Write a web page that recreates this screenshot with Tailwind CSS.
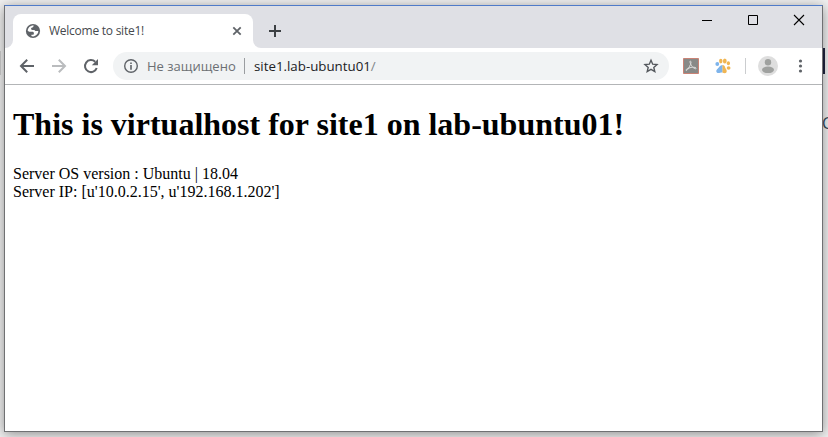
<!DOCTYPE html>
<html lang="ru">
<head>
<meta charset="utf-8">
<title>Welcome to site1!</title>
<script src="https://cdn.jsdelivr.net/npm/@tailwindcss/browser@4"></script>
</head>
<body class="relative h-[437px] w-[828px] overflow-hidden bg-[#f1f1f1] pl-1 pt-[5px]">
  <!-- Content of the window behind -->
  <div class="absolute left-[-4px] top-[51px] h-6 w-[5px] bg-[#d0d0d0]"></div>
  <div class="absolute left-[822px] top-[48px] h-[26px] w-[3px] bg-[#202540]"></div>
  <div class="absolute left-[822px] top-[113px] font-['Open_Sans',sans-serif] text-[16px] leading-5 text-[#33475b]">C</div>

  <div class="relative flex h-[427px] w-[819px] flex-col border border-[#707173] border-t-[#4f7bc9] bg-white shadow-[0_2px_12px_rgba(0,0,0,0.42)]">
    <!-- Tab strip -->
    <div class="flex h-[42px] shrink-0 bg-[#dfe0e5]">
      <div class="flex w-2 items-end bg-white"><div class="h-[42px] w-2 rounded-br-lg bg-[#dfe0e5]"></div></div>
      <div class="mt-2 flex h-[34px] w-60 items-center rounded-t-lg bg-white pl-3">
        <svg class="size-4 shrink-0" viewBox="0 0 16 16"><circle cx="8" cy="8" r="7.1" fill="#5f6368"/><path d="M8.8 2.6C8.2 3.2 8.7 3.8 7.9 4.3C7.1 4.8 6.1 4.6 6.1 5.6C6.1 6.5 6.3 6.9 7.3 6.9H9.1C10 6.9 9.9 8.1 10.8 8.1H13.3C13.3 10.8 11.1 13.3 8 13.4C7.4 13.4 6.9 13.3 6.4 13.1V11.7H7.5C8.5 11.7 8.9 11.1 8.9 10.4C8.9 9.2 8 8.8 7.1 8.8H4.6C4 8.8 3.4 8.2 2.7 7.8C2.8 5 5.3 2.3 8.8 2.6Z" fill="#fff"/><path d="M9 3.1L12.7 5.5L12.9 7.2H11.3C10.5 7.2 10.5 6 9.6 5.8L7.6 5.7C8.2 4.8 9.2 4.8 9 3.1Z" fill="#5f6368"/></svg>
        <span class="ml-2 w-[180px] whitespace-nowrap font-['Open_Sans',sans-serif] text-[12px] leading-4 tracking-[-0.25px] text-[#45494d]">Welcome to site1!</span>
        <svg class="size-4 shrink-0" viewBox="0 0 16 16"><path d="M4.3 4.3L11.7 11.7M11.7 4.3L4.3 11.7" stroke="#5f6368" stroke-width="1.8"/></svg>
      </div>
      <div class="h-[42px] w-[9px] bg-white"><div class="h-[42px] rounded-bl-lg bg-[#dfe0e5]"></div></div>
      <svg class="ml-[5px] mt-[17px] size-4 shrink-0" viewBox="0 0 16 16"><path d="M8 2V14M2 8H14" stroke="#3c4043" stroke-width="2"/></svg>
      <div class="ml-auto flex">
        <svg class="h-7 w-[46px]" viewBox="0 0 46 28"><path d="M18 14.5H28" stroke="#000"/></svg>
        <svg class="h-7 w-[46px]" viewBox="0 0 46 28"><path d="M18.5 9.5H27.5V18.5H18.5Z" fill="none" stroke="#000"/></svg>
        <svg class="h-7 w-[46px]" viewBox="0 0 46 28"><path d="M18 9L28 19M28 9L18 19" stroke="#000" stroke-width="1.1"/></svg>
      </div>
    </div>

    <!-- Toolbar -->
    <div class="flex h-[37px] shrink-0 items-center border-b border-[#b3b5b7] bg-white pl-3">
      <svg class="size-5 shrink-0" viewBox="0 0 20 20" fill="none" stroke="#5f6368" stroke-width="2"><path d="M17 10H4.5M10.2 3.8L4 10L10.2 16.2"/></svg>
      <svg class="ml-3 size-5 shrink-0" viewBox="0 0 20 20" fill="none" stroke="#babcbe" stroke-width="2"><path d="M3 10H15.5M9.8 3.8L16 10L9.8 16.2"/></svg>
      <svg class="ml-3 size-5 shrink-0" viewBox="0 0 20 20"><path d="M15.7 12A6 6 0 1 1 14.2 5.8" fill="none" stroke="#5f6368" stroke-width="2"/><path d="M17 3V9.2H10.8Z" fill="#5f6368"/></svg>
      <div class="ml-3 flex h-7 w-[556px] shrink-0 items-center rounded-full bg-[#f1f3f4] pl-[10px] pr-[10px] font-['Open_Sans',sans-serif] text-[14px]">
        <svg class="size-4 shrink-0" viewBox="0 0 16 16"><circle cx="8" cy="8" r="6.3" fill="none" stroke="#5f6368" stroke-width="1.4"/><path d="M7.2 4.5H8.8V6H7.2ZM7.2 7H8.8V11.7H7.2Z" fill="#5f6368"/></svg>
        <span class="ml-2 w-[97px] whitespace-nowrap text-[13px] leading-5 text-[#6b6f73]">Не защищено</span>
        <span class="h-4 w-px bg-[#9a9da0]"></span>
        <span class="ml-[9px] whitespace-nowrap text-[13.3px] leading-5 text-[#202124]">site1.lab-ubuntu01<span class="text-[#80868b]">/</span></span>
        <svg class="ml-auto size-4 shrink-0" viewBox="0 0 16 16"><path d="M8 2.3L9.7 6.2L14 6.6L10.8 9.4L11.8 13.6L8 11.4L4.2 13.6L5.2 9.4L2 6.6L6.3 6.2Z" fill="none" stroke="#54585d" stroke-width="1.4"/></svg>
      </div>
      <svg class="ml-[14px] size-4 shrink-0" viewBox="0 0 16 16"><path d="M.5.5H15.5V15.5H.5Z" fill="#888987" stroke="#c98275"/><path d="M7.4 3C8.7 3.2 7.8 6 6.6 8.4C5.2 11.2 3.6 13.1 3 12.3C2.5 11.2 6.5 9.6 9.2 9.3C12 9 13.7 9.8 13 10.6C12.1 11.5 9.4 9.2 8.2 7.1C7.1 5.2 6.6 3.3 7.4 3Z" fill="none" stroke="#dedddc" stroke-width="1"/></svg>
      <svg class="ml-4 size-4 shrink-0" viewBox="0 0 16 16"><g fill="#f0b552"><ellipse cx="9.8" cy="2.9" rx="1.9" ry="2.5"/><ellipse cx="13.4" cy="5.2" rx="1.6" ry="2"/><ellipse cx="13.6" cy="10" rx="1.9" ry="1.7"/><path d="M7.3 7C8.9 6.8 9.9 8 10.2 9.5C10.6 11 11.9 11.6 11.7 13.5C11.4 15.6 9.5 15.6 7.3 14.4Z"/><ellipse cx="5.8" cy="3.1" rx="1.7" ry="2.3"/></g><g fill="#7eb4eb"><ellipse cx="2.3" cy="6" rx="1.9" ry="1.9"/><path d="M7.3 7V14.4C5.5 14.2 4.3 15.6 2.5 14.9C.6 14 1.2 11.8 2.6 10.7C4.4 9.3 5 7.1 7.3 7Z"/></g></svg>
      <div class="ml-[14px] h-4 w-px shrink-0 bg-[#cbcdcf]"></div>
      <svg class="ml-3 size-5 shrink-0" viewBox="0 0 20 20"><circle cx="10" cy="10" r="10" fill="#dedede"/><circle cx="10" cy="6.2" r="3.2" fill="#9fa19f"/><ellipse cx="10" cy="13.8" rx="6" ry="3.3" fill="#9fa19f"/></svg>
      <svg class="ml-[14px] h-4 w-4 shrink-0" viewBox="0 0 16 16" fill="#5f6368"><circle cx="8.5" cy="3" r="1.6"/><circle cx="8.5" cy="8" r="1.6"/><circle cx="8.5" cy="13" r="1.6"/></svg>
    </div>

    <!-- Page -->
    <main class="min-h-0 flex-1 bg-white px-2 pt-[21.4px] font-['Liberation_Serif',serif] text-[16px] leading-[18px] text-black">
      <h1 class="whitespace-nowrap text-[32px] font-bold leading-[37px]">This is virtualhost for site1 on lab-ubuntu01!</h1>
      <p class="mt-[22px] whitespace-nowrap">Server OS version : Ubuntu | 18.04<br>Server IP: [u'10.0.2.15', u'192.168.1.202']</p>
    </main>
  </div>
</body>
</html>
